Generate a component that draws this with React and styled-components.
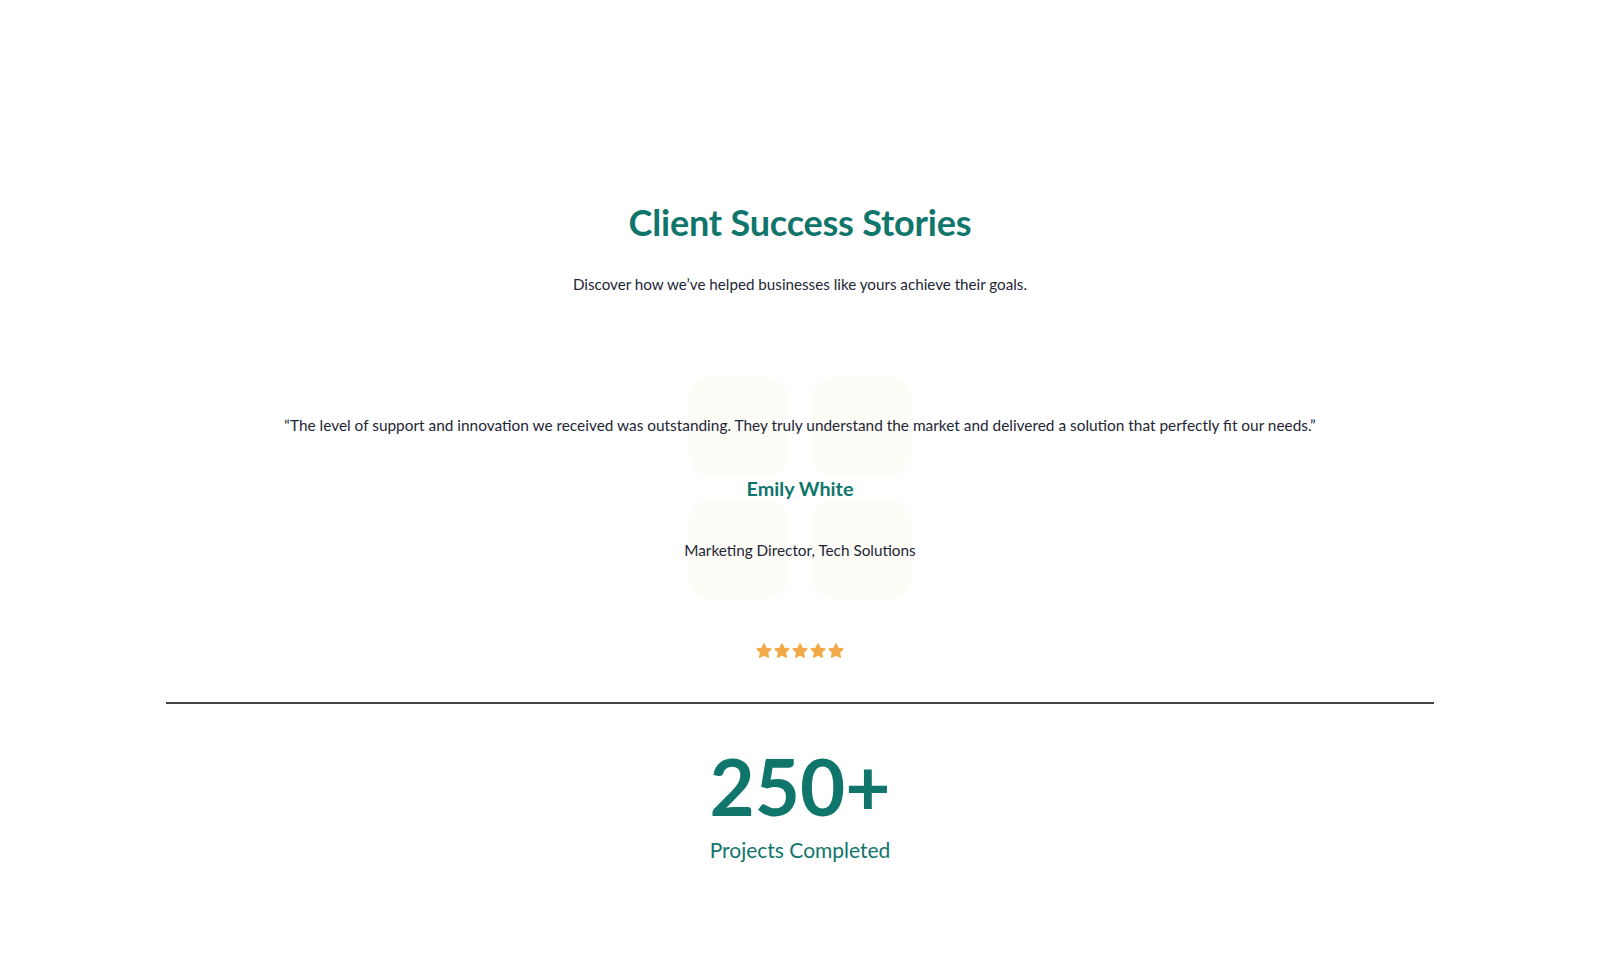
import React from "react";
import styled, { createGlobalStyle } from "styled-components";

const teal = "#10766b";
const ink = "#1e2636";

const GlobalStyle = createGlobalStyle`
  body {
    margin: 0;
    background: #ffffff;
    font-family: "Lato", "Inter", "Liberation Sans", sans-serif;
    color: ${ink};
  }
`;

function Star() {
  return (
    <svg width="18" height="18" viewBox="0 0 24 24">
      <path
        d="M12 2.6l2.8 5.9 6.45.82-4.75 4.45 1.22 6.4L12 17.05 6.28 20.17l1.22-6.4-4.75-4.45 6.45-.82z"
        fill="#f1aa47"
        stroke="#f1aa47"
        strokeWidth="2"
        strokeLinejoin="round"
      />
    </svg>
  );
}

export default function App() {
  return (
    <>
      <GlobalStyle />
      <Page>
        <Header>
          <Title>Client Success Stories</Title>
          <Subtitle>
            Discover how we’ve helped businesses like yours achieve their goals.
          </Subtitle>
        </Header>

        <Testimonial>
          <Tiles aria-hidden="true">
            <Tile />
            <Tile />
            <Tile />
            <Tile />
          </Tiles>
          <Quote>
            “The level of support and innovation we received was outstanding.
            They truly understand the market and delivered a solution that
            perfectly fit our needs.”
          </Quote>
          <Name>Emily White</Name>
          <Role>Marketing Director, Tech Solutions</Role>
        </Testimonial>

        <Stars>
          {[0, 1, 2, 3, 4].map((i) => (
            <Star key={i} />
          ))}
        </Stars>

        <Divider />

        <Stat>
          <StatNumber>250+</StatNumber>
          <StatLabel>Projects Completed</StatLabel>
        </Stat>
      </Page>
    </>
  );
}

const Page = styled.main`
  display: flex;
  flex-direction: column;
  align-items: center;
  padding: 198px 166px 120px;
`;

const Header = styled.header`
  display: flex;
  flex-direction: column;
  align-items: center;
`;

const Title = styled.h2`
  margin: 0;
  font-size: 36px;
  line-height: 48px;
  font-weight: 700;
  color: ${teal};
  letter-spacing: -0.2px;
`;

const Subtitle = styled.p`
  margin: 26px 0 0;
  font-size: 15.2px;
  line-height: 24px;
`;

const Testimonial = styled.section`
  position: relative;
  display: flex;
  flex-direction: column;
  align-items: center;
  margin-top: 117px;
`;

const Tiles = styled.div`
  position: absolute;
  top: 50%;
  left: 50%;
  transform: translate(-50%, -50%);
  display: grid;
  grid-template-columns: repeat(2, 99px);
  grid-auto-rows: 99px;
  gap: 23px;
  z-index: 0;
`;

const Tile = styled.div`
  background: #fdfcf6;
  border-radius: 20px;
`;

const Quote = styled.p`
  position: relative;
  margin: 0;
  font-size: 15.4px;
  line-height: 24px;
`;

const Name = styled.h3`
  position: relative;
  margin: 37px 0 0;
  font-size: 19.8px;
  line-height: 28px;
  font-weight: 700;
  color: ${teal};
`;

const Role = styled.p`
  position: relative;
  margin: 36px 0 0;
  font-size: 15.3px;
  line-height: 24px;
`;

const Stars = styled.div`
  display: flex;
  gap: 0;
  margin-top: 80px;
`;

const Divider = styled.hr`
  align-self: stretch;
  margin: 42px 0 0;
  border: none;
  border-top: 2px solid #444444;
`;

const Stat = styled.div`
  display: flex;
  flex-direction: column;
  align-items: center;
  margin-top: 42px;
`;

const StatNumber = styled.div`
  font-size: 78px;
  line-height: 80px;
  font-weight: 700;
  color: ${teal};
`;

const StatLabel = styled.div`
  margin-top: 10px;
  font-size: 21px;
  line-height: 28px;
  color: ${teal};
`;
